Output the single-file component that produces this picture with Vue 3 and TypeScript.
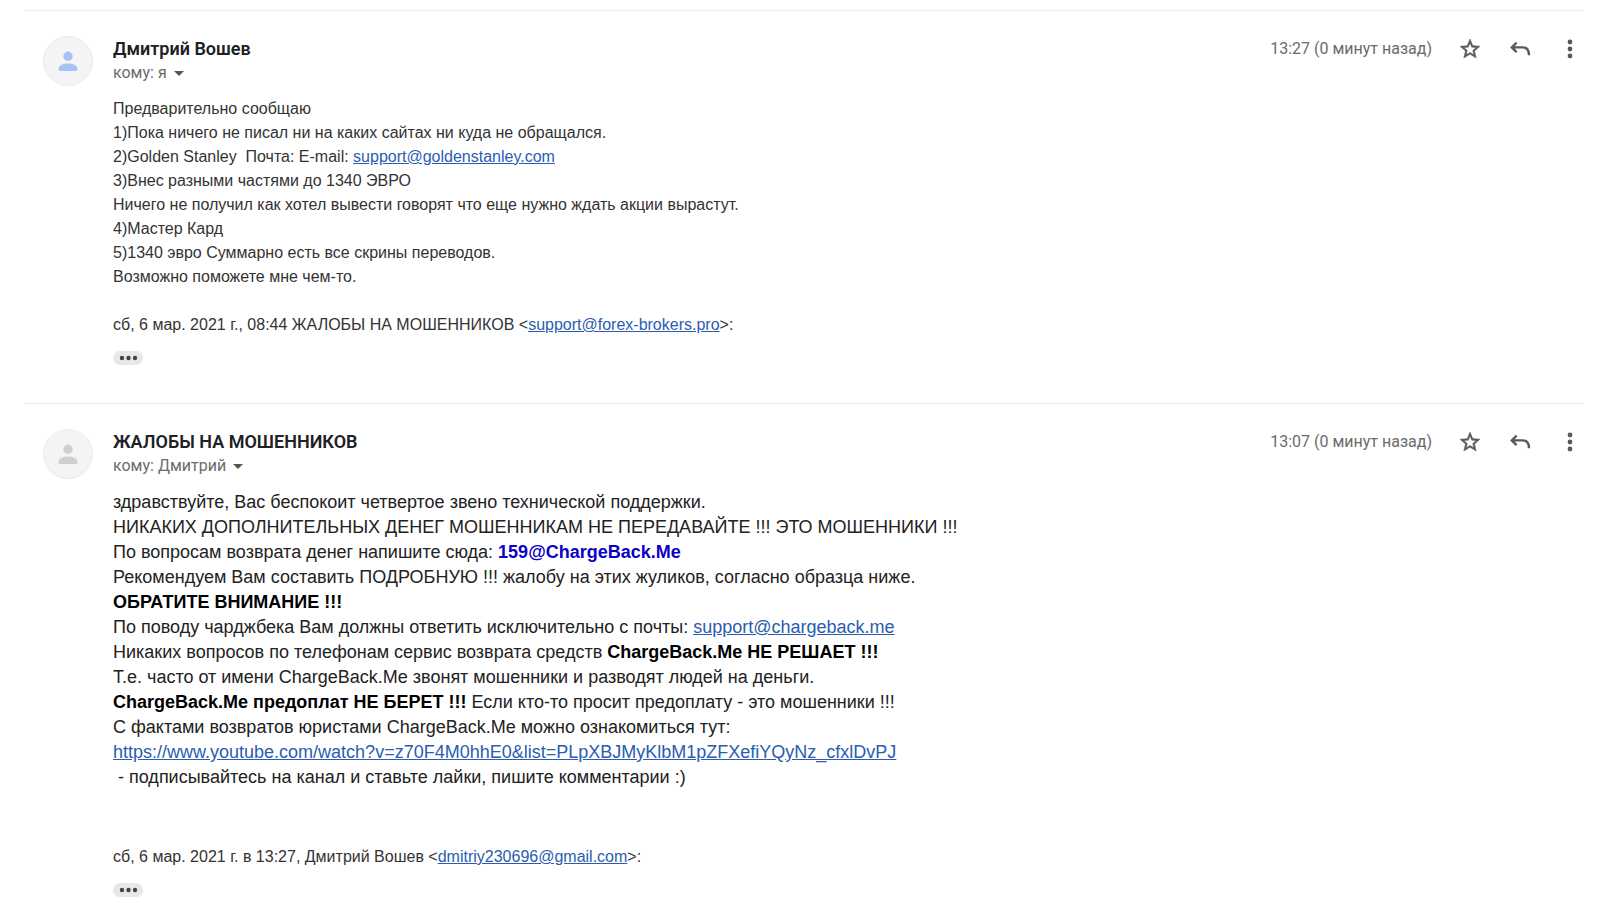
<script setup lang="ts">
interface Part {
  text: string
  kind?: 'link' | 'bold' | 'address'
  href?: string
}

interface Message {
  id: number
  sender: string
  recipient: string
  time: string
  tone: 'blue' | 'grey'
  size: 'normal' | 'large'
  lines: Part[][]
  quote: { intro: string; email: string }
}

const messages: Message[] = [
  {
    id: 1,
    sender: 'Дмитрий Вошев',
    recipient: 'кому: я',
    time: '13:27 (0 минут назад)',
    tone: 'blue',
    size: 'normal',
    lines: [
      [{ text: 'Предварительно сообщаю' }],
      [{ text: '1)Пока ничего не писал ни на каких сайтах ни куда не обращался.' }],
      [
        { text: '2)Golden Stanley  Почта: E-mail: ' },
        { text: 'support@goldenstanley.com', kind: 'link', href: 'mailto:support@goldenstanley.com' },
      ],
      [{ text: '3)Внес разными частями до 1340 ЭВРО' }],
      [{ text: 'Ничего не получил как хотел вывести говорят что еще нужно ждать акции вырастут.' }],
      [{ text: '4)Мастер Кард' }],
      [{ text: '5)1340 эвро Суммарно есть все скрины переводов.' }],
      [{ text: 'Возможно поможете мне чем-то.' }],
    ],
    quote: { intro: 'сб, 6 мар. 2021 г., 08:44 ЖАЛОБЫ НА МОШЕННИКОВ <', email: 'support@forex-brokers.pro' },
  },
  {
    id: 2,
    sender: 'ЖАЛОБЫ НА МОШЕННИКОВ',
    recipient: 'кому: Дмитрий',
    time: '13:07 (0 минут назад)',
    tone: 'grey',
    size: 'large',
    lines: [
      [{ text: 'здравствуйте, Вас беспокоит четвертое звено технической поддержки.' }],
      [{ text: 'НИКАКИХ ДОПОЛНИТЕЛЬНЫХ ДЕНЕГ МОШЕННИКАМ НЕ ПЕРЕДАВАЙТЕ !!! ЭТО МОШЕННИКИ !!!' }],
      [{ text: 'По вопросам возврата денег напишите сюда: ' }, { text: '159@ChargeBack.Me', kind: 'address' }],
      [{ text: 'Рекомендуем Вам составить ПОДРОБНУЮ !!! жалобу на этих жуликов, согласно образца ниже.' }],
      [{ text: 'ОБРАТИТЕ ВНИМАНИЕ !!!', kind: 'bold' }],
      [
        { text: 'По поводу чарджбека Вам должны ответить исключительно с почты: ' },
        { text: 'support@chargeback.me', kind: 'link', href: 'mailto:support@chargeback.me' },
      ],
      [
        { text: 'Никаких вопросов по телефонам сервис возврата средств ' },
        { text: 'ChargeBack.Me НЕ РЕШАЕТ !!!', kind: 'bold' },
      ],
      [{ text: 'Т.е. часто от имени ChargeBack.Me звонят мошенники и разводят людей на деньги.' }],
      [
        { text: 'ChargeBack.Me предоплат НЕ БЕРЕТ !!!', kind: 'bold' },
        { text: ' Если кто-то просит предоплату - это мошенники !!!' },
      ],
      [{ text: 'С фактами возвратов юристами ChargeBack.Me можно ознакомиться тут:' }],
      [
        {
          text: 'https://www.youtube.com/watch?v=z70F4M0hhE0&list=PLpXBJMyKlbM1pZFXefiYQyNz_cfxlDvPJ',
          kind: 'link',
          href: 'https://www.youtube.com/watch?v=z70F4M0hhE0&list=PLpXBJMyKlbM1pZFXefiYQyNz_cfxlDvPJ',
        },
      ],
      [{ text: ' - подписывайтесь на канал и ставьте лайки, пишите комментарии :)' }],
    ],
    quote: { intro: 'сб, 6 мар. 2021 г. в 13:27, Дмитрий Вошев <', email: 'dmitriy230696@gmail.com' },
  },
]
</script>

<template>
  <main class="thread">
    <article v-for="m in messages" :key="m.id" class="message" :class="m.size">
      <div class="avatar" :class="m.tone">
        <svg viewBox="0 0 50 50" aria-hidden="true">
          <circle cx="25" cy="20" r="4.8" />
          <path d="M15.3 35.5v-2.6c0-3.3 5-5.3 9.7-5.3s9.7 2 9.7 5.3v2.6z" />
        </svg>
      </div>
      <div class="content">
        <header class="head">
          <div class="who">
            <h2 class="sender">{{ m.sender }}</h2>
            <button type="button" class="recipient">
              <span>{{ m.recipient }}</span>
              <svg class="caret" viewBox="0 0 10 5" aria-hidden="true"><path d="M0 0h10L5 5z" /></svg>
            </button>
          </div>
          <div class="tools">
            <time class="time">{{ m.time }}</time>
            <button type="button" class="tool" aria-label="Пометить">
              <svg viewBox="0 0 24 24" aria-hidden="true">
                <path class="star" d="M22 9.24l-7.19-.62L12 2 9.19 8.63 2 9.24l5.46 4.73L5.82 21 12 17.27 18.18 21l-1.63-7.03L22 9.24zM12 15.4l-3.76 2.27 1-4.28-3.32-2.88 4.38-.38L12 6.1l1.71 4.04 4.38.38-3.32 2.88 1 4.28L12 15.4z" />
              </svg>
            </button>
            <button type="button" class="tool" aria-label="Ответить">
              <svg viewBox="0 0 24 24" aria-hidden="true">
                <path class="stroke" d="M8.6 5.6 3.8 10.4l4.8 4.8M4 10.4h10.6c4 0 6.4 2.7 6.4 7.9" />
              </svg>
            </button>
            <button type="button" class="tool" aria-label="Ещё">
              <svg viewBox="0 0 24 24" aria-hidden="true">
                <circle cx="12" cy="5" r="2.4" />
                <circle cx="12" cy="12" r="2.4" />
                <circle cx="12" cy="19" r="2.4" />
              </svg>
            </button>
          </div>
        </header>
        <div class="body">
          <p v-for="(line, i) in m.lines" :key="i"><template v-for="(part, j) in line" :key="j"><a v-if="part.kind === 'link'" :href="part.href">{{ part.text }}</a><b v-else-if="part.kind" :class="part.kind">{{ part.text }}</b><template v-else>{{ part.text }}</template></template></p>
        </div>
        <p class="quote">{{ m.quote.intro }}<a :href="'mailto:' + m.quote.email">{{ m.quote.email }}</a>&gt;:</p>
        <button type="button" class="more" aria-label="Показать скрытый текст">
          <svg viewBox="0 0 30 14" aria-hidden="true">
            <circle cx="9" cy="7" r="2.2" />
            <circle cx="15.5" cy="7" r="2.2" />
            <circle cx="22" cy="7" r="2.2" />
          </svg>
        </button>
      </div>
    </article>
  </main>
</template>

<style>
html,
body {
  background: #fff;
}

body {
  margin: 0;
}
</style>

<style scoped>
.thread {
  padding: 10px 18px 0 24px;
  font-family: 'Liberation Sans', Arial, sans-serif;
  color: #222;
}

.message {
  display: flex;
  gap: 20px;
  border-top: 1px solid #ececec;
  padding: 25px 0 38px 19px;
}

.message:last-child {
  padding-bottom: 0;
}

.avatar {
  flex: none;
  box-sizing: border-box;
  width: 50px;
  height: 50px;
  border: 1px solid #ebebeb;
  border-radius: 50%;
  background: #f4f4f4;
  overflow: hidden;
}

.avatar svg {
  display: block;
}

.avatar.blue {
  fill: #a6c3f3;
}

.avatar.grey {
  fill: #cfcfcf;
}

.content {
  flex: 1;
  min-width: 0;
}

.head {
  display: flex;
  justify-content: space-between;
  font-family: Roboto, sans-serif;
}

.sender {
  margin: 0;
  font-size: 18px;
  line-height: 25px;
  font-weight: 600;
  color: #202124;
}

button {
  border: 0;
  padding: 0;
  background: none;
  font: inherit;
  cursor: pointer;
}

.recipient {
  display: flex;
  align-items: center;
  gap: 7px;
  font-size: 16px;
  line-height: 24px;
  color: #6b6b6b;
}

.caret {
  width: 10px;
  height: 5px;
  fill: #555;
}

.tools {
  display: flex;
  align-items: center;
  height: 25px;
}

.time {
  margin-right: 13px;
  font-size: 16px;
  line-height: 24px;
  color: #6b6b6b;
}

.tool {
  display: flex;
  justify-content: center;
  width: 50px;
}

.tool:last-child {
  margin-right: -12px;
}

.tool svg {
  width: 24px;
  height: 24px;
  fill: #5a5a5a;
}

.tool .star {
  stroke: #5a5a5a;
  stroke-width: 0.5;
}

.tool .stroke {
  fill: none;
  stroke: #5a5a5a;
  stroke-width: 2.4;
}

p {
  margin: 0;
  white-space: pre-wrap;
}

.body,
.quote {
  font-size: 16px;
  line-height: 24px;
  color: #333;
}

.body {
  padding-top: 12px;
}

.large .body {
  font-size: 18px;
  line-height: 25px;
  color: #222;
}

.quote {
  margin-top: 24px;
}

.large .quote {
  margin-top: 55px;
}

a {
  color: #2a5db0;
  text-decoration: underline;
}

.bold {
  color: #000;
}

.address {
  color: #0b00c8;
}

.more {
  display: block;
  margin-top: 14px;
  width: 30px;
  height: 14px;
  border-radius: 7px;
  background: #e8e8ea;
}

.more svg {
  display: block;
  fill: #444;
}
</style>
